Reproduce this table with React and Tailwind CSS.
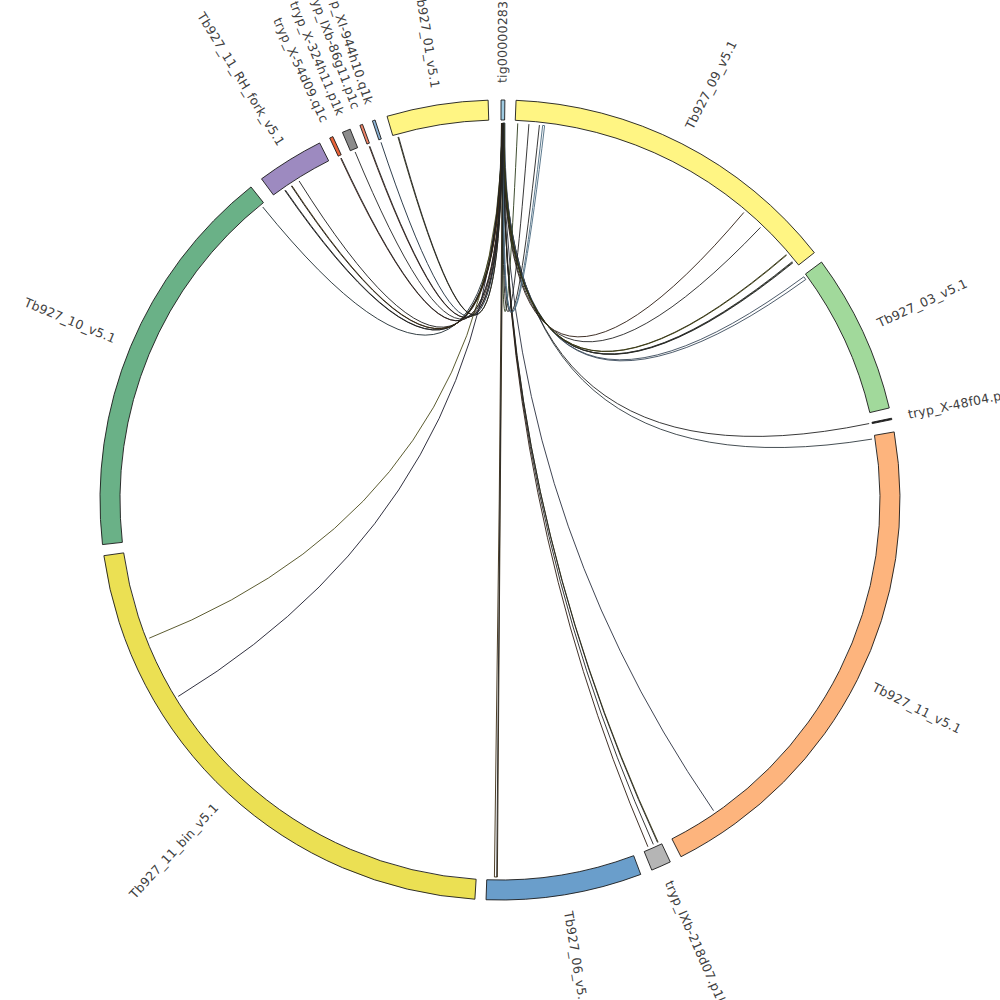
import React from 'react';

const CX = 500;
const CY = 500;
const R_OUT = 400;
const R_IN = 380;
const R_LINK = 377;
const R_LABEL = 417;

const pt = (deg, r) => {
  const a = (deg * Math.PI) / 180;
  return [CX + r * Math.sin(a), CY - r * Math.cos(a)];
};
const f = (p) => `${p[0].toFixed(2)},${p[1].toFixed(2)}`;

const segments = [
  { name: 'tig00000283', s: 0.15, e: 0.7, fill: '#9ecae1' },
  { name: 'Tb927_09_v5.1', s: 2.3, e: 51.8, fill: '#fff583' },
  { name: 'Tb927_03_v5.1', s: 53.5, e: 76.7, fill: '#a1d99b' },
  { name: 'tryp_X-48f04.p1k', s: 78.2, e: 78.4, fill: '#222222' },
  { name: 'Tb927_11_v5.1', s: 80.2, e: 153.1, fill: '#fdb47d' },
  { name: 'tryp_IXb-218d07.p1k', s: 154.8, e: 157.7, fill: '#b5b5b5' },
  { name: 'Tb927_06_v5.1', s: 159.4, e: 182.0, fill: '#6a9ecb' },
  { name: 'Tb927_11_bin_v5.1', s: 183.6, e: 262.0, fill: '#ebe053' },
  { name: 'Tb927_10_v5.1', s: 263.6, e: 321.5, fill: '#6ab187' },
  { name: 'Tb927_11_RH_fork_v5.1', s: 323.4, e: 333.2, fill: '#9d8ac0' },
  { name: 'tryp_X-54d09.q1c', s: 334.8, e: 335.3, fill: '#e8643a' },
  { name: 'tryp_X-324h11.p1k', s: 336.8, e: 338.0, fill: '#8c8c8c' },
  { name: 'tryp_IXb-86g11.p1c', s: 339.5, e: 339.9, fill: '#f08468' },
  { name: 'tryp_XI-944h10.q1k', s: 341.4, e: 341.8, fill: '#8db4d6' },
  { name: 'Tb927_01_v5.1', s: 343.6, e: 358.3, fill: '#fff583' },
];

// links from the tig contig: [tig angle, target angle, target angle 2 (ribbon) or null, colour]
const links = [
  [0.22, 321.0, null, '#1d2a30'],
  [0.25, 325.2, null, '#111111'],
  [0.28, 326.4, null, '#111111'],
  [0.3, 327.8, null, '#1a1a1a'],
  [0.33, 335.0, null, '#3a1a10'],
  [0.34, 337.4, null, '#222222'],
  [0.36, 339.7, null, '#3a1a10'],
  [0.37, 341.6, null, '#1a2a3a'],
  [0.39, 344.3, null, '#2a2a10'],
  [0.35, 248.5, null, '#4a4a1a'],
  [0.37, 238.6, null, '#1a1a2a'],
  [0.4, 180.4, 180.85, '#3a2a10'],
  [0.44, 155.2, null, '#3a3a10'],
  [0.47, 156.0, null, '#222222'],
  [0.5, 156.9, null, '#2a1a10'],
  [0.52, 145.5, null, '#2a3040'],
  [0.55, 78.3, null, '#222222'],
  [0.58, 80.7, null, '#303a40'],
  [0.6, 53.7, 54.2, '#3a4a5a'],
  [0.5, 40.3, null, '#2a1a10'],
  [0.52, 43.7, null, '#222222'],
  [0.55, 49.4, null, '#2a2a10'],
  [0.56, 50.9, null, '#1a2a10'],
  [0.58, 51.0, null, '#222222'],
  [0.42, 2.7, null, '#2a3a1a'],
  [0.45, 4.4, null, '#222222'],
  [0.48, 6.0, null, '#222222'],
  [0.5, 6.5, 6.8, '#4a6a80'],
  // overlapping duplicates that thicken the bundle under the tig contig
  [0.3, 325.3, null, '#222222'],
  [0.32, 326.5, null, '#3a2a10'],
  [0.4, 335.1, null, '#222222'],
  [0.43, 339.8, null, '#222222'],
  [0.46, 180.5, null, '#222222'],
  [0.62, 50.8, null, '#2a2a2a'],
  [0.6, 49.5, null, '#3a3a10'],
  [0.53, 155.3, null, '#222222'],
  [0.38, 344.4, null, '#222222'],
];

const sectorPath = (s, e) => {
  const large = e - s > 180 ? 1 : 0;
  return [
    `M${f(pt(s, R_OUT))}`,
    `A${R_OUT},${R_OUT} 0 ${large} 1 ${f(pt(e, R_OUT))}`,
    `L${f(pt(e, R_IN))}`,
    `A${R_IN},${R_IN} 0 ${large} 0 ${f(pt(s, R_IN))}`,
    'Z',
  ].join(' ');
};

const linkPath = (a, b1, b2) => {
  const c = `${CX},${CY}`;
  if (b2 === null) {
    return `M${f(pt(a, R_LINK))} Q${c} ${f(pt(b1, R_LINK))}`;
  }
  const a2 = a + 0.15;
  return `M${f(pt(a, R_LINK))} Q${c} ${f(pt(b2, R_LINK))} L${f(pt(b1, R_LINK))} Q${c} ${f(pt(a2, R_LINK))} Z`;
};

const Label = ({ name, angle }) => {
  const right = angle < 180;
  const rot = right ? angle - 90 : angle + 90;
  return (
    <text
      x={right ? CX + R_LABEL : CX - R_LABEL}
      y={CY}
      textAnchor={right ? 'start' : 'end'}
      dominantBaseline="middle"
      transform={`rotate(${rot} ${CX} ${CY})`}
      fill="#404040"
      style={{ fontFamily: '"DejaVu Sans", Verdana, sans-serif', fontSize: '12.5px', letterSpacing: '0.2px' }}
    >
      {name}
    </text>
  );
};

const App = () => {
  return (
    <div className="w-[1000px] h-[1000px] bg-white overflow-hidden">
      <svg width="1000" height="1000" viewBox="0 0 1000 1000" className="block">
        {/* links */}
        <g fill="none" strokeWidth="0.9">
          {links.map(([a, b1, b2, c], i) => (
            <path key={i} d={linkPath(a, b1, b2)} stroke={c} />
          ))}
        </g>

        {/* ideograms */}
        <g stroke="#1a1a1a" strokeWidth="0.9" strokeLinejoin="miter">
          {segments.map((seg) => (
            <path key={seg.name} d={sectorPath(seg.s, seg.e)} fill={seg.fill} />
          ))}
        </g>

        {/* labels */}
        {segments.map((seg) => (
          <Label key={seg.name} name={seg.name} angle={(seg.s + seg.e) / 2} />
        ))}
      </svg>
    </div>
  );
};

export default App;
